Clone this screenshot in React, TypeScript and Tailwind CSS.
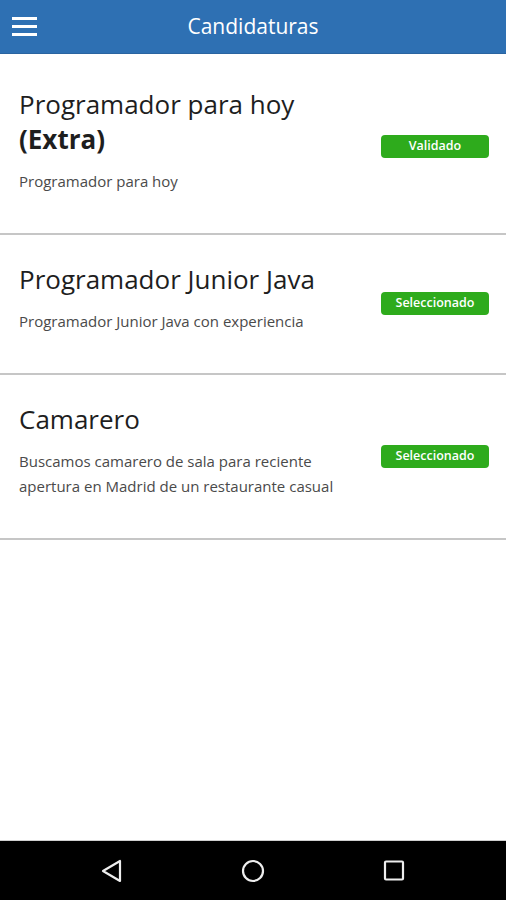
import React from "react";

type Item = { title: React.ReactNode; desc: string[]; status: string };

const items: Item[] = [
  {
    title: (
      <>
        Programador para hoy <span className="font-bold">(Extra)</span>
      </>
    ),
    desc: ["Programador para hoy"],
    status: "Validado",
  },
  {
    title: "Programador Junior Java",
    desc: ["Programador Junior Java con experiencia"],
    status: "Seleccionado",
  },
  {
    title: "Camarero",
    desc: ["Buscamos camarero de sala para reciente apertura en Madrid de un restaurante casual"],
    status: "Seleccionado",
  },
];

export default function App() {
  return (
    <div
      className="w-[506px] h-[900px] bg-white flex flex-col overflow-hidden"
      style={{ fontFamily: "'Open Sans', 'Noto Sans', sans-serif" }}
    >
      <header className="h-[54px] shrink-0 bg-[#2e70b3] border-b border-[#2a64a0] relative flex items-center justify-center">
        <div className="absolute left-[12px] top-[17px] flex flex-col gap-[5px]">
          <span className="block w-[25px] h-[3px] bg-white" />
          <span className="block w-[25px] h-[3px] bg-white" />
          <span className="block w-[25px] h-[3px] bg-white" />
        </div>
        <h1 className="text-white text-[21px] font-normal">Candidaturas</h1>
      </header>

      <main className="flex-1 flex flex-col pt-[6px]">
        {items.map((it, i) => (
          <div
            key={i}
            className="flex items-center pl-[19px] pr-[17px] pt-[27px] pb-[39px] border-b-2 border-[#c6c6c6] gap-[20px]"
          >
            <div className="flex-1 min-w-0">
              <div className="text-[26px] leading-[35px] text-[#1e1e1e]">{it.title}</div>
              <div className="mt-[12px] text-[15px] leading-[25px] text-[#4a4a4a]">
                {it.desc.map((d, j) => (
                  <p key={j}>{d}</p>
                ))}
              </div>
            </div>
            <div className="w-[108px] h-[23px] mt-[11px] shrink-0 rounded-[4px] bg-[#2eab1c] flex items-center justify-center text-white text-[12.5px] font-semibold">
              {it.status}
            </div>
          </div>
        ))}
      </main>

      <nav className="h-[60px] shrink-0 bg-black border-t border-[#cfcfcf] flex items-center">
        <div className="w-full flex items-center justify-between px-[99px]">
          <svg width="26" height="26" viewBox="0 0 26 26">
            <path d="M21 3 L21 23 L4 13 Z" fill="none" stroke="#eee" strokeWidth="2.2" strokeLinejoin="round" />
          </svg>
          <svg width="26" height="26" viewBox="0 0 26 26">
            <circle cx="13" cy="13" r="10" fill="none" stroke="#eee" strokeWidth="2.2" />
          </svg>
          <svg width="26" height="26" viewBox="0 0 26 26">
            <rect x="4" y="3.5" width="18" height="18" rx="1" fill="none" stroke="#eee" strokeWidth="2.2" />
          </svg>
        </div>
      </nav>
    </div>
  );
}
